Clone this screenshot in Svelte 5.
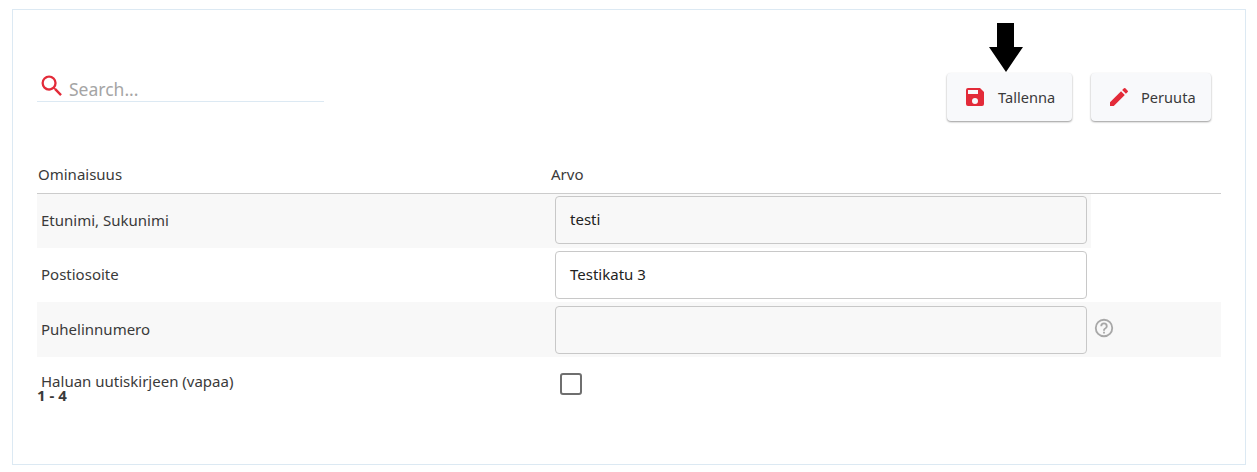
<script>
  const rows = [
    { label: 'Etunimi, Sukunimi', value: 'testi', kind: 'short' },
    { label: 'Postiosoite', value: 'Testikatu 3', kind: 'plain' },
    { label: 'Puhelinnumero', value: '', kind: 'help' }
  ];
</script>

<div class="panel">
  <div class="toolbar">
    <div class="search">
      <svg class="search-icon" viewBox="0 0 24 24" width="28" height="28" aria-hidden="true">
        <path fill="#e32b39" d="M15.5 14h-.79l-.28-.27A6.47 6.47 0 0 0 16 9.5 6.5 6.5 0 1 0 9.5 16c1.61 0 3.09-.59 4.23-1.57l.27.28v.79l5 4.99L20.49 19l-4.99-5zm-6 0C7.01 14 5 11.99 5 9.5S7.01 5 9.5 5 14 7.01 14 9.5 11.99 14 9.5 14z"/>
      </svg>
      <span class="placeholder">Search...</span>
    </div>
    <div class="actions">
      <div class="btn-wrap">
        <svg class="arrow" viewBox="0 0 34 49" width="34" height="49" aria-hidden="true">
          <path d="M8 0h17v24h9L17 49 0 24h8z" fill="#000"/>
        </svg>
        <button class="btn save">
          <svg viewBox="0 0 24 24" width="24" height="24" aria-hidden="true">
            <path fill="#e32b39" d="M17 3H5a2 2 0 0 0-2 2v14a2 2 0 0 0 2 2h14a2 2 0 0 0 2-2V7l-4-4zm-5 16a3 3 0 1 1 0-6 3 3 0 0 1 0 6zm3-10H5V5h10v4z"/>
          </svg>
          <span>Tallenna</span>
        </button>
      </div>
      <button class="btn cancel">
        <svg viewBox="0 0 24 24" width="24" height="24" aria-hidden="true">
          <path fill="#e32b39" d="M3 17.25V21h3.75L17.81 9.94l-3.75-3.75L3 17.25zM20.71 7.04a1 1 0 0 0 0-1.41l-2.34-2.34a1 1 0 0 0-1.41 0l-1.83 1.83 3.75 3.75 1.83-1.83z"/>
        </svg>
        <span>Peruuta</span>
      </button>
    </div>
  </div>

  <div class="table">
    <div class="head">
      <div class="name-col">Ominaisuus</div>
      <div>Arvo</div>
    </div>
    {#each rows as row}
      <div class="row {row.kind}">
        <div class="name-col label">{row.label}</div>
        <div class="input">{row.value}</div>
        {#if row.kind === 'help'}
          <svg class="help-icon" viewBox="0 0 24 24" width="22" height="22" aria-hidden="true">
            <path fill="#a8a8a8" d="M11 18h2v-2h-2v2zm1-16a10 10 0 1 0 0 20 10 10 0 0 0 0-20zm0 18a8 8 0 1 1 0-16 8 8 0 0 1 0 16zm0-14a4 4 0 0 0-4 4h2a2 2 0 1 1 4 0c0 2-3 1.75-3 5h2c0-2.25 3-2.5 3-5a4 4 0 0 0-4-4z"/>
          </svg>
        {/if}
      </div>
    {/each}
    <div class="row last">
      <div class="name-col label">Haluan uutiskirjeen (vapaa)</div>
      <div class="checkbox"></div>
    </div>
    <div class="count">1 - 4</div>
  </div>
</div>

<style>
  :global(body) {
    margin: 0;
    background: #fff;
    font-family: "Noto Sans", "Open Sans", sans-serif;
    color: #3a3a3a;
  }
  .panel {
    box-sizing: border-box;
    width: 1234px;
    height: 456px;
    margin: 9px 0 0 12px;
    border: 1px solid #dce9f3;
    padding: 0 24px;
    font-size: 15px;
  }
  .toolbar {
    display: flex;
    justify-content: space-between;
    height: 149px;
    align-items: flex-start;
  }
  .search {
    width: 287px;
    height: 28px;
    margin-top: 63px;
    display: flex;
    align-items: center;
    border-bottom: 1px solid #dce9f3;
  }
  .search-icon { margin-left: 1px; flex: none; margin-top: -2px; }
  .placeholder { color: #a5a5a5; font-size: 17.5px; margin-left: 3px; margin-top: 4px; }
  .actions {
    display: flex;
    gap: 19px;
    margin-top: 63px;
    margin-right: 10px;
  }
  .btn-wrap { position: relative; }
  .arrow { position: absolute; left: 42px; top: -50px; }
  .btn {
    display: flex;
    align-items: center;
    height: 48px;
    padding: 0;
    border: 0;
    border-radius: 4px;
    background: #f8f9fb;
    box-shadow: 0 1px 2px rgba(0,0,0,.4);
    font: inherit;
    font-size: 14.6px;
    color: #3a3a3a;
  }
  .save { width: 125px; padding-left: 16px; gap: 11px; }
  .cancel { width: 120px; padding-left: 16px; gap: 10px; }
  .table { width: 1184px; }
  .head {
    display: flex;
    height: 35px;
    box-sizing: border-box;
    padding: 4px 0 0 1px;
    line-height: 22px;
    border-bottom: 1px solid #ccc;
  }
  .head .name-col { width: 513px; }
  .row {
    display: flex;
    align-items: flex-start;
    box-sizing: border-box;
  }
  .label {
    width: 518px;
    padding-left: 4px;
    box-sizing: border-box;
    line-height: 22px;
    align-self: center;
  }
  .short { background: #f8f8f8; width: 1054px; height: 54px; padding-top: 2px; }
  .plain { height: 54px; padding-top: 3px; }
  .help { background: #f8f8f8; height: 55px; padding-top: 4px; }
  .short .label { padding-bottom: 4px; }
  .plain .label, .help .label { padding-bottom: 6px; }
  .help-icon { margin: 11px 0 0 6px; }
  .input {
    box-sizing: border-box;
    width: 532px;
    height: 48px;
    border: 1px solid #c8c8c8;
    border-radius: 4px;
    padding: 0 14px;
    line-height: 45px;
    color: #222;
  }
  .last { height: 38px; padding-top: 14px; }
  .last .label { align-self: flex-start; line-height: 20px; }
  .checkbox {
    box-sizing: border-box;
    width: 22px;
    height: 22px;
    margin: 2px 0 0 5px;
    border: 2.5px solid #6f6f6f;
    border-radius: 3px;
  }
  .count {
    font-weight: 700;
    font-size: 15px;
    line-height: 16px;
    margin-top: -8px;
    padding-left: 0;
  }
</style>
